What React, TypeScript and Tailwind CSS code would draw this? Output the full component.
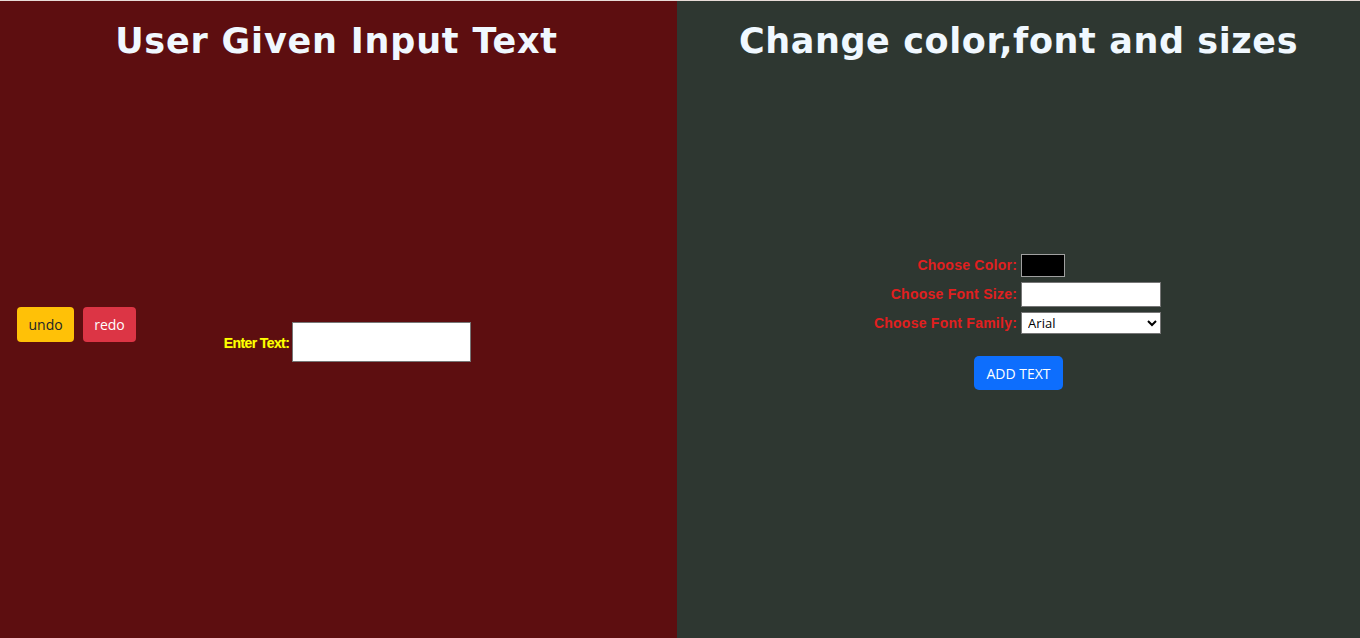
import { useState } from "react";

const App = () => {
  const [text, setText] = useState("");
  const [color, setColor] = useState("#000000");
  const [size, setSize] = useState("");
  const [family, setFamily] = useState("Arial");

  return (
    <div className="flex h-[638px] w-full border-t border-[#e8dcd8] overflow-hidden">
      {/* left: text input */}
      <div className="w-[677px] shrink-0 bg-[#5d0e10] flex flex-col">
        <div className="h-[80px] flex items-center justify-center">
          <h1 className="font-['DejaVu_Sans',Verdana,sans-serif] font-bold text-[35px] text-[#f0f8ff] tracking-[0.8px] -translate-x-[2px]">
            User Given Input Text
          </h1>
        </div>
        <div className="flex items-start pt-[226px]">
          <div className="flex gap-[9px] ml-[17px]">
            <button className="h-[35px] px-[11.5px] rounded-[4px] bg-[#ffc107] text-[#212529] text-[14px] font-['Open_Sans',sans-serif]">
              undo
            </button>
            <button className="h-[35px] px-[11px] rounded-[4px] bg-[#dc3545] text-white text-[14px] font-['Open_Sans',sans-serif]">
              redo
            </button>
          </div>
          <div className="flex items-center gap-[3px] ml-[88px] mt-[15px]">
            <label className="font-['Liberation_Sans',Arial,sans-serif] font-bold text-[14px] text-[#ffff00] tracking-[-0.6px] [text-shadow:0_0_1px_#8a6a00] translate-y-[1px]">
              Enter Text:
            </label>
            <input
              value={text}
              onChange={(e) => setText(e.target.value)}
              className="w-[179px] h-[40px] bg-white border border-[#767676] outline-none px-1"
            />
          </div>
        </div>
      </div>

      {/* right: style controls */}
      <div className="flex-1 bg-[#2e3731] flex flex-col">
        <div className="h-[80px] flex items-center justify-center">
          <h1 className="font-['DejaVu_Sans',Verdana,sans-serif] font-bold text-[35px] text-[#f0f8ff] tracking-[0.6px]">
            Change color,font and sizes
          </h1>
        </div>
        <div className="flex flex-col items-center pt-[172px]">
          <div className="grid grid-cols-[auto_auto] gap-x-[4px] items-center font-['Liberation_Sans',Arial,sans-serif] font-bold text-[14px] text-[#e11f1f] tracking-[0.25px] -translate-x-[1px]">
            <label className="text-right">Choose Color:</label>
            <div className="py-[1px]">
              <input
                type="color"
                value={color}
                onChange={(e) => setColor(e.target.value)}
                className="block w-[44px] h-[23px] bg-black border border-[#a0a0a0] p-0 [&::-webkit-color-swatch-wrapper]:p-0 [&::-webkit-color-swatch]:border-0"
              />
            </div>
            <label className="text-right mt-[4px]">Choose Font Size:</label>
            <input
              value={size}
              onChange={(e) => setSize(e.target.value)}
              className="w-[140px] h-[25px] mt-[4px] bg-white border border-[#767676] outline-none px-1"
            />
            <label className="text-right mt-[5px]">Choose Font Family:</label>
            <select
              value={family}
              onChange={(e) => setFamily(e.target.value)}
              className="w-[140px] h-[22px] mt-[5px] bg-white border border-[#767676] text-black text-[13px] font-normal tracking-normal font-['Open_Sans',sans-serif] px-[2px]"
            >
              <option>Arial</option>
              <option>Verdana</option>
              <option>Times New Roman</option>
              <option>Courier New</option>
            </select>
          </div>
          <button className="mt-[22px] h-[34px] px-[12px] rounded-[5px] bg-[#0d6efd] text-white text-[14px] font-['Open_Sans',sans-serif]">
            ADD TEXT
          </button>
        </div>
      </div>
    </div>
  );
};

export default App;
